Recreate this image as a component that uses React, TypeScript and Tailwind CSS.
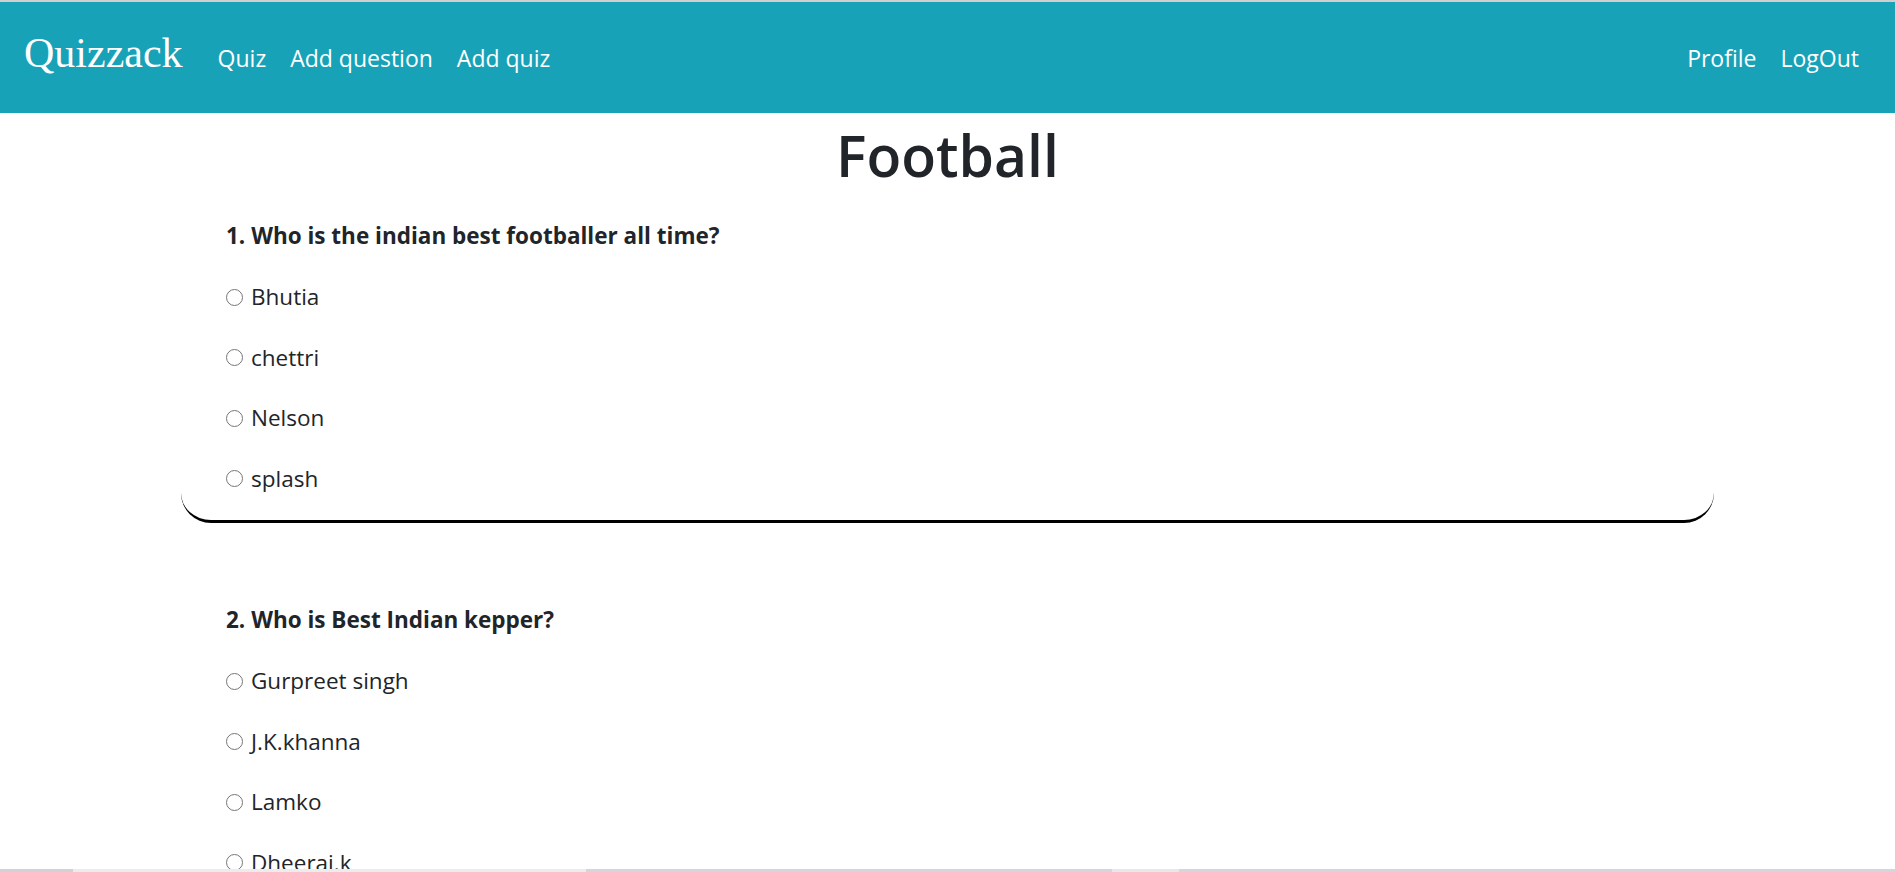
import React from "react";

const questions = [
  {
    q: "1. Who is the indian best footballer all time?",
    opts: ["Bhutia", "chettri", "Nelson", "splash"],
  },
  {
    q: "2. Who is Best Indian kepper?",
    opts: ["Gurpreet singh", "J.K.khanna", "Lamko", "Dheeraj.k"],
  },
];

function Radio() {
  return (
    <span className="inline-block w-[17px] h-[17px] rounded-full border border-[#767676] bg-white shrink-0" />
  );
}

export default function App() {
  return (
    <div className="min-h-screen bg-white text-[#212529]" style={{ fontFamily: '"Open Sans", "Noto Sans", sans-serif' }}>
      <div className="h-[2px] bg-[#cfcfcf]" />
      <nav className="h-[111px] bg-[#18a2b8] flex items-center pl-[24px] pr-[36px] text-white">
        <span className="text-[42px] leading-none mr-[35px] -mt-[10px]" style={{ fontFamily: '"Liberation Serif", serif' }}>
          Quizzack
        </span>
        <div className="flex items-center gap-[24px] text-[23px] mt-[2px]">
          <span>Quiz</span>
          <span>Add question</span>
          <span>Add quiz</span>
        </div>
        <div className="ml-auto flex items-center gap-[24px] text-[23px] mt-[2px]">
          <span>Profile</span>
          <span>LogOut</span>
        </div>
      </nav>
      <h1 className="mt-[6px] h-[72px] leading-[72px] text-center text-[57px] font-semibold">Football</h1>
      <div className="w-[1533px] mx-auto">
        {questions.map((item, i) => (
          <div key={i} className="pt-[30px] pl-[45px] pb-[11px] mb-[52px] border-b-[3px] border-black rounded-b-[30px]">
            <div className="h-[30px] leading-[30px] text-[22.5px] font-bold">{item.q}</div>
            <div className="mt-[16px]">
              {item.opts.map((o) => (
                <div key={o} className="h-[60.5px] flex items-center gap-[8px] text-[22.5px]">
                  <Radio />
                  <span>{o}</span>
                </div>
              ))}
            </div>
          </div>
        ))}
      </div>
      <div className="fixed left-0 right-0 bottom-0 h-[3px] flex">
        <div className="w-[73px] bg-[#d2d2d6]" />
        <div className="w-[513px] bg-[#ececec]" />
        <div className="w-[526px] bg-[#d3d6dd]" />
        <div className="w-[67px] bg-[#e8e8ea]" />
        <div className="flex-1 bg-[#d3d6dd]" />
      </div>
    </div>
  );
}
